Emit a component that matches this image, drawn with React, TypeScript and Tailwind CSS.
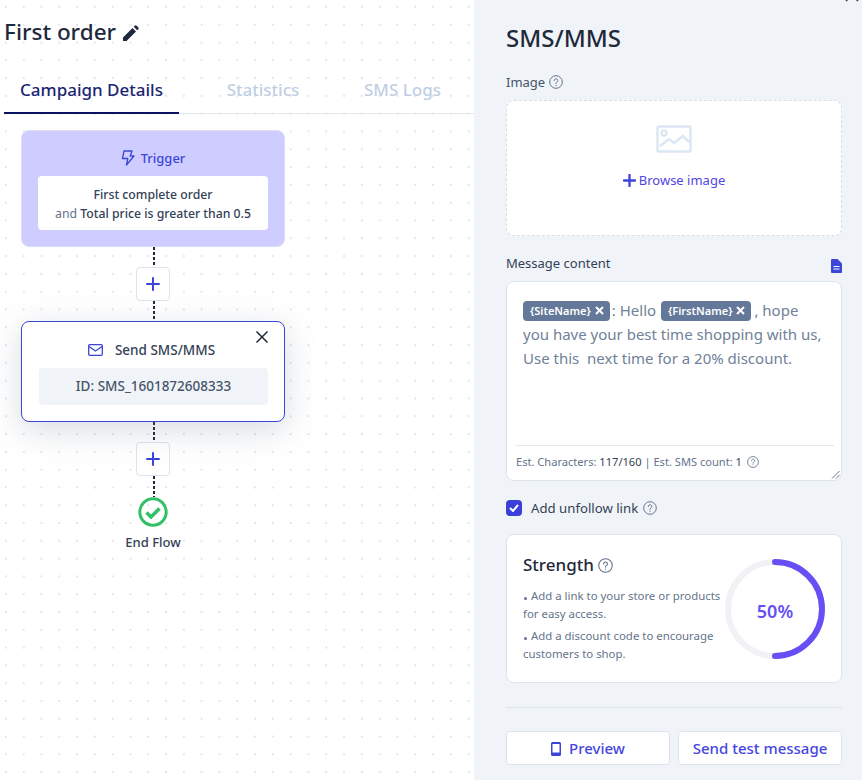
import React from "react";

const Help = ({ s = 14 }: { s?: number }) => (
  <svg width={s} height={s} viewBox="0 0 14 14" fill="none" stroke="#64748b" strokeWidth="1" className="shrink-0">
    <circle cx="7" cy="7" r="6.3" />
    <path d="M5.2 5.5a1.8 1.8 0 1 1 2.8 1.5c-.6.4-1 .7-1 1.5" strokeLinecap="round" />
    <circle cx="7" cy="10.3" r=".6" fill="#64748b" stroke="none" />
  </svg>
);

const Plus = ({ s = 14, w = 2 }: { s?: number; w?: number }) => (
  <svg width={s} height={s} viewBox="0 0 14 14" fill="none" stroke="#3b46d9" strokeWidth={w} strokeLinecap="round">
    <path d="M7 1v12M1 7h12" />
  </svg>
);

const Connector = ({ h }: { h: number }) => (
  <div className="ml-[2px] w-[2px] bg-[repeating-linear-gradient(to_bottom,#1e293b_0,#1e293b_3px,transparent_3px,transparent_5px)]" style={{ height: h }} />
);

const AddBtn = () => (
  <div className="w-[34px] h-[34px] rounded bg-white border border-[#dde3ee] flex items-center justify-center">
    <Plus />
  </div>
);

const Chip = ({ t }: { t: string }) => (
  <span className="inline-flex items-center h-5 pl-[7px] pr-[6px] rounded bg-[#64789a] text-white text-[11px] font-semibold align-[1px] gap-[4px] leading-none">
    {t}
    <svg width="9" height="9" viewBox="0 0 9 9" stroke="#fff" strokeWidth="2"><path d="M1 1l7 7M8 1L1 8" /></svg>
  </span>
);

const Dot = () => (
  <span className="inline-block w-[3px] h-[3px] ml-[1px] mr-[4px] rounded-full bg-[#64748b] align-[0px]" />
);

export default function App() {
  return (
    <div className="w-[862px] h-[780px] overflow-hidden flex font-['Noto_Sans',sans-serif]">
      <div className="w-[474px] shrink-0 h-full bg-white bg-[radial-gradient(#e3e6ec_1px,transparent_1px)] bg-[length:17.8px_17.8px] bg-[position:-3px_-2px]">
        <div className="pl-[4px] pt-[17px] h-[46px] flex items-center gap-[6px]">
          <h1 className="text-[22.5px] leading-[30px] font-medium text-[#1e293b]">First order</h1>
          <svg width="17" height="17" viewBox="0 0 17 17" fill="#1e293b" className="mt-[3px]">
            <path d="M1 12.5 10.5 3l3.5 3.5L4.500 16H1zM11.700 1.800l1-1a1.400 1.400 0 0 1 2 0l1.500 1.500a1.400 1.400 0 0 1 0 2l-1 1z" />
          </svg>
        </div>
        <div className="mt-[19px] ml-[4px] flex h-[49px] border-b border-[#e2e6ee]">
          <div className="w-[175px] -mb-px h-[49px] pt-[2px] border-b-2 border-[#0a1266] flex items-center justify-center text-[17px] font-medium text-[#1c2674]">Campaign Details</div>
          <div className="w-[168px] pt-[1px] flex items-center justify-center text-[17px] font-medium text-[#bfcfe3]">Statistics</div>
          <div className="w-[111px] pt-[1px] flex items-center justify-center text-[17px] font-medium text-[#bfcfe3]">SMS Logs</div>
        </div>
        <div className="ml-[21px] mt-[16px] w-[264px] flex flex-col items-center">
          <div className="w-full h-[117px] rounded-lg bg-[#cfcdff] border border-[#dcdcf7] flex flex-col items-center pt-[17px]">
            <div className="flex items-center gap-[6px] text-[13px] font-medium text-[#3b46d9] leading-5">
              <svg width="14" height="16" viewBox="0 0 14 16" fill="none" stroke="#3b46d9" strokeWidth="1.3" strokeLinejoin="round">
                <path d="M3 1h8L9.200 6H13L5.500 15l1.300-6.500H1.500z" />
              </svg>
              Trigger
            </div>
            <div className="mt-[8px] w-[230px] h-[54px] pt-[1px] rounded bg-white flex flex-col items-center justify-center text-[12.25px] leading-[19px] font-medium text-[#334155]">
              <div>First complete order</div>
              <div><span className="text-[#64748b] font-normal">and</span> Total price is greater than 0.5</div>
            </div>
          </div>
          <Connector h={20} />
          <AddBtn />
          <Connector h={20} />
          <div className="relative w-full h-[101px] rounded-lg bg-white border border-[#3b46d9] shadow-[0_8px_32px_rgba(100,116,139,0.25)] flex flex-col items-center pt-[18px]">
            <svg width="18" height="18" viewBox="0 0 18 18" stroke="#1e293b" strokeWidth="1.5" className="absolute right-[13px] top-[6px]">
              <path d="M3.500 3.500l11 11M14.500 3.500l-11 11" />
            </svg>
            <div className="-ml-[3px] flex items-center gap-[12px] text-[13.5px] font-medium text-[#334155] leading-5">
              <svg width="15" height="12" viewBox="0 0 15 12" fill="none" stroke="#3b46d9" strokeWidth="1.300">
                <rect x=".7" y=".7" width="13.600" height="10.600" rx="1" />
                <path d="M1 2.500l6.500 4.500L14 2.500" />
              </svg>
              Send SMS/MMS
            </div>
            <div className="mt-[8px] ml-[1px] w-[229px] h-[37px] rounded bg-[#f0f4f9] flex items-center justify-center text-[13.5px] font-medium text-[#475569]">
              ID: SMS_1601872608333
            </div>
          </div>
          <Connector h={20} />
          <AddBtn />
          <Connector h={21} />
          <svg width="30" height="30" viewBox="0 0 30 30" fill="none">
            <circle cx="15" cy="15" r="13.200" stroke="#34c068" strokeWidth="3" />
            <path d="M8.500 15.500l4.500 4.500 8.500-8.500" stroke="#34c068" strokeWidth="3.600" />
          </svg>
          <div className="mt-[7px] text-[13px] leading-4 font-medium text-[#334155]">End Flow</div>
        </div>
      </div>

      <div className="relative flex-1 min-w-0 h-full bg-[#f0f4f9] pl-[32px] pr-[20px]">
        <svg width="16" height="16" viewBox="0 0 16 16" stroke="#334155" strokeWidth="1.500" className="absolute right-[2px] -top-[13px]">
          <path d="M2 2l12 12M14 2L2 14" />
        </svg>
        <h2 className="pt-[23px] text-[24px] leading-[30px] font-medium text-[#1e293b]">SMS/MMS</h2>
        <div className="mt-[19px] flex items-center gap-[4px] text-[13px] leading-5 text-[#475569]">Image <Help /></div>
        <div className="mt-[8px] h-[136px] rounded-lg bg-white border border-dashed border-[#d5dce8] flex flex-col items-center pt-[24px]">
          <svg width="36" height="28" viewBox="0 0 36 28" fill="none" stroke="#dde6f3" strokeWidth="2.500">
            <rect x="1.500" y="1.500" width="33" height="25" rx="1" />
            <circle cx="8" cy="8" r="2.500" />
            <path d="M4 21l9-7 5 4 9-7 6 6" />
          </svg>
          <div className="mt-[17px] flex items-center gap-[3px] text-[13px] leading-5 text-[#4f46e5]">
            <Plus s={13} w={2.500} />
            Browse image
          </div>
        </div>
        <div className="mt-[17px] flex justify-between items-start h-[28px]">
          <span className="text-[13px] leading-5 text-[#334155]">Message content</span>
          <svg width="11" height="14" viewBox="0 0 11 14" className="mt-[6px]">
            <path d="M0 1a1 1 0 0 1 1-1h5.500L11 4.500V13a1 1 0 0 1-1 1H1a1 1 0 0 1-1-1z" fill="#3b46d9" />
            <path d="M2.500 7.500h6M2.500 10h6" stroke="#fff" strokeWidth="1" />
          </svg>
        </div>
        <div className="relative h-[200px] rounded-lg bg-white border border-[#dde3ee] px-[16px] pt-[16px]">
          <div className="text-[15px] leading-[24px] text-[#708198] w-[304px]">
            <Chip t="{SiteName}" /><span className="ml-[2px] mr-[1px]">: Hello </span><Chip t="{FirstName}" /><span className="ml-[3px]">, hope</span> you have your best time shopping with us, Use this&nbsp; next time for a 20% discount.
          </div>
          <div className="absolute left-[9px] right-[7px] bottom-[34px] border-t border-[#e2e6ee]" />
          <div className="absolute left-[9px] bottom-[10px] flex items-center gap-[5px] text-[11.1px] leading-4 text-[#64748b]">
            <span>Est. Characters: <span className="text-[#334155]">117/160</span> | Est. SMS count: <span className="text-[#334155]">1</span></span>
            <Help s={12} />
          </div>
          <svg width="9" height="9" viewBox="0 0 9 9" stroke="#64748b" strokeWidth="1" className="absolute right-[1px] bottom-[1px]">
            <path d="M8.500 1L1 8.500M8.500 5L5 8.500" />
          </svg>
        </div>
        <div className="mt-[17px] flex items-center text-[13.2px] leading-5 text-[#334155]">
          <div className="w-4 h-4 rounded-sm bg-[#3b3fd9] flex items-center justify-center mr-[9px]">
            <svg width="10" height="8" viewBox="0 0 10 8" fill="none" stroke="#fff" strokeWidth="2"><path d="M1 4l3 3 5-6" /></svg>
          </div>
          Add unfollow link
          <span className="ml-[5px]"><Help /></span>
        </div>
        <div className="mt-[16px] h-[149px] rounded-lg bg-white border border-[#dde3ee] pl-[16px] pr-[16px] flex items-center justify-between">
          <div className="w-[200px] -mt-[1px]">
            <div className="flex items-center gap-[4px] text-[17px] leading-6 font-medium text-[#1e293b]">Strength <Help s={15} /></div>
            <div className="mt-[10px] text-[11.4px] leading-[18px] text-[#64748b]">
              <div><Dot />Add a link to your store or products for easy access.</div>
              <div className="mt-[4px]"><Dot />Add a discount code to encourage customers to shop.</div>
            </div>
          </div>
          <div className="relative w-[100px] h-[100px] flex items-center justify-center">
            <svg width="100" height="100" viewBox="0 0 100 100" fill="none" className="absolute inset-0">
              <circle cx="50" cy="50" r="47" stroke="#f1f2f5" strokeWidth="6" />
              <path d="M50 3a47 47 0 0 1 0 94" stroke="#6650f5" strokeWidth="6" strokeLinecap="round" />
            </svg>
            <span className="relative mt-[5px] text-[18px] font-semibold text-[#6650f5]">50%</span>
          </div>
        </div>
        <div className="mt-[24px] border-t border-[#dde3ee]" />
        <div className="mt-[23px] flex gap-[8px]">
          <div className="flex-1 h-[34px] pt-[1px] rounded bg-white border border-[#dde3ee] flex items-center justify-center gap-[8px] text-[15px] font-medium text-[#4646e0]">
            <svg width="10" height="14" viewBox="0 0 10 14">
              <path fillRule="evenodd" d="M1.500 0h7A1.500 1.500 0 0 1 10 1.500v11A1.500 1.500 0 0 1 8.500 14h-7A1.500 1.500 0 0 1 0 12.500v-11A1.500 1.500 0 0 1 1.500 0zM1.500 2v8.500h7V2z" fill="#3b46d9" />
            </svg>
            Preview
          </div>
          <div className="flex-1 h-[34px] pt-[1px] rounded bg-white border border-[#dde3ee] flex items-center justify-center text-[15px] font-medium text-[#4646e0]">
            Send test message
          </div>
        </div>
      </div>
    </div>
  );
}
